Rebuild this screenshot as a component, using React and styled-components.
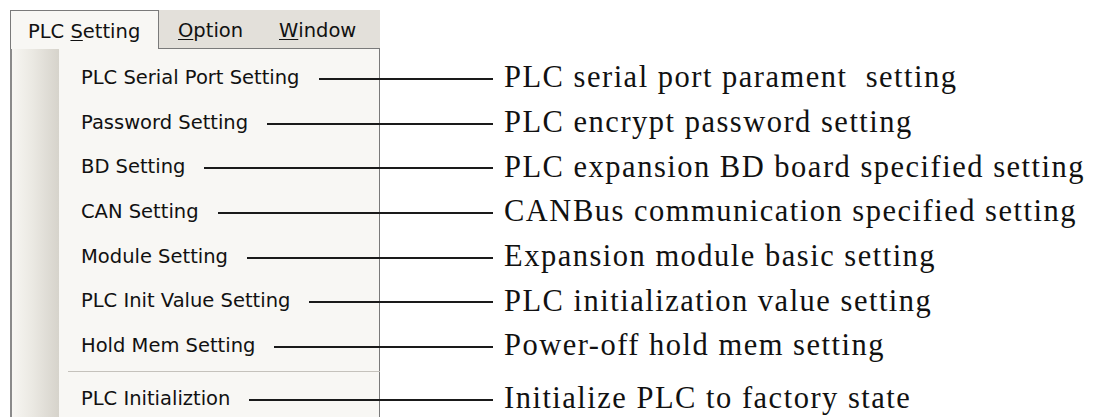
import React from "react";
import styled, { createGlobalStyle } from "styled-components";

const Global = createGlobalStyle`
  html, body {
    margin: 0;
    padding: 0;
    background: #ffffff;
  }
`;

const Page = styled.div`
  width: 1098px;
  height: 417px;
  overflow: hidden;
  padding: 7px 0 0 10px;
  box-sizing: border-box;
  background: #ffffff;
`;

const MenuBar = styled.div`
  display: flex;
  align-items: flex-end;
  width: 370px;
  height: 41px;
  background: linear-gradient(#ffffff 0, #ffffff 3px, #e3e0da 3px);
  font-family: "DejaVu Sans", Tahoma, sans-serif;
  font-size: 19.5px;
  color: #111;
`;

const BarItem = styled.div`
  box-sizing: border-box;
  display: flex;
  align-items: center;
  padding: 2px ${(p) => (p.open ? "17px" : "19px")} 0;
  background: ${(p) => (p.open ? "#f8f7f4" : "transparent")};
  border: ${(p) => (p.open ? "1px solid #7a7a7a" : "none")};
  border-bottom: none;
  width: ${(p) => p.w}px;
  position: relative;
  z-index: 1;
  margin-bottom: ${(p) => (p.open ? "-1px" : "0")};
  height: ${(p) => (p.open ? "39px" : "38px")};
  u {
    text-decoration: underline;
    text-underline-offset: 2px;
  }
`;

const Panel = styled.div`
  width: 370px;
  box-sizing: border-box;
  border: 1px solid #7a7a7a;
  border-left: 2px solid #8a8a8a;
  border-bottom: none;
  padding: 6px 0 0 0;
  height: 370px;
  background:
    linear-gradient(to right, #f7f6f2 0, #ebe9e3 20px, #d6d3cb 47px, #f8f7f4 47px);
`;

const Row = styled.div`
  display: grid;
  grid-template-columns: 481px auto;
  align-items: center;
  height: 44.7px;
  width: 1100px;
`;

const Left = styled.div`
  display: flex;
  align-items: center;
  padding-left: 69px;
  font-family: "DejaVu Sans", Tahoma, sans-serif;
  font-size: 19.5px;
  color: #111;
  white-space: nowrap;
`;

const Leader = styled.div`
  flex: 1;
  height: 2px;
  background: #1a1a1a;
  margin-left: 19px;
  margin-top: 3px;
`;

const Note = styled.div`
  padding-left: 11px;
  font-family: "Liberation Serif", "Times New Roman", serif;
  font-size: 30.5px;
  letter-spacing: 1.5px;
  color: #111;
  white-space: pre;
  margin-top: 1px;
`;

const Separator = styled.div`
  height: 8px;
  display: flex;
  align-items: center;
  padding-left: 56px;
  width: 312px;
  &::after {
    content: "";
    flex: 1;
    height: 1px;
    background: #c5c2bc;
  }
`;

const items = [
  ["PLC Serial Port Setting", "PLC serial port parament  setting"],
  ["Password Setting", "PLC encrypt password setting"],
  ["BD Setting", "PLC expansion BD board specified setting"],
  ["CAN Setting", "CANBus communication specified setting"],
  ["Module Setting", "Expansion module basic setting"],
  ["PLC Init Value Setting", "PLC initialization value setting"],
  ["Hold Mem Setting", "Power-off hold mem setting"],
];

const Item = ({ label, note }) => (
  <Row>
    <Left>
      <span>{label}</span>
      <Leader />
    </Left>
    <Note>{note}</Note>
  </Row>
);

export default function App() {
  return (
    <Page>
      <Global />
      <MenuBar>
        <BarItem open w={149}>
          PLC&nbsp;<u>S</u>etting
        </BarItem>
        <BarItem w={101}>
          <u>O</u>ption
        </BarItem>
        <BarItem w={100}>
          <u>W</u>indow
        </BarItem>
      </MenuBar>
      <Panel>
        {items.map(([label, note]) => (
          <Item key={label} label={label} note={note} />
        ))}
        <Separator />
        <Item label="PLC Initializtion" note="Initialize PLC to factory state" />
      </Panel>
    </Page>
  );
}
